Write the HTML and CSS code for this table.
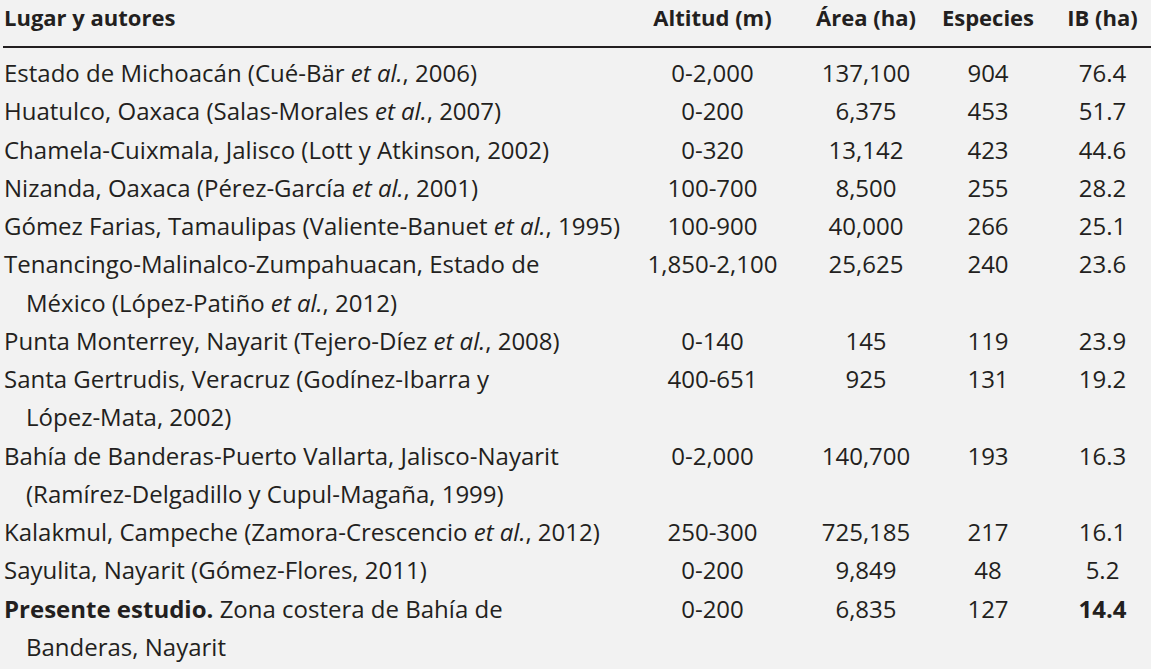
FILE: index.html
```html
<!DOCTYPE html>
<html lang="es">
<head>
<meta charset="utf-8">
<title>Tabla</title>
<link rel="stylesheet" href="styles.css">
</head>
<body>
<table class="tbl">
  <colgroup>
    <col class="c-place">
    <col class="c-alt">
    <col class="c-area">
    <col class="c-sp">
    <col class="c-ib">
  </colgroup>
  <thead>
    <tr>
      <th class="place">Lugar y autores</th>
      <th>Altitud (m)</th>
      <th>Área (ha)</th>
      <th>Especies</th>
      <th class="ib">IB (ha)</th>
    </tr>
  </thead>
  <tbody>
    <tr><td class="place">Estado de Michoacán (Cué-Bär <i>et al.</i>, 2006)</td><td>0-2,000</td><td>137,100</td><td>904</td><td class="ib">76.4</td></tr>
    <tr><td class="place">Huatulco, Oaxaca (Salas-Morales <i>et al.</i>, 2007)</td><td>0-200</td><td>6,375</td><td>453</td><td class="ib">51.7</td></tr>
    <tr><td class="place">Chamela-Cuixmala, Jalisco (Lott y Atkinson, 2002)</td><td>0-320</td><td>13,142</td><td>423</td><td class="ib">44.6</td></tr>
    <tr><td class="place">Nizanda, Oaxaca (Pérez-García <i>et al.</i>, 2001)</td><td>100-700</td><td>8,500</td><td>255</td><td class="ib">28.2</td></tr>
    <tr><td class="place">Gómez Farias, Tamaulipas (Valiente-Banuet <i>et al.</i>, 1995)</td><td>100-900</td><td>40,000</td><td>266</td><td class="ib">25.1</td></tr>
    <tr><td class="place">Tenancingo-Malinalco-Zumpahuacan, Estado de<br>México (López-Patiño <i>et al.</i>, 2012)</td><td>1,850-2,100</td><td>25,625</td><td>240</td><td class="ib">23.6</td></tr>
    <tr><td class="place">Punta Monterrey, Nayarit (Tejero-Díez <i>et al.</i>, 2008)</td><td>0-140</td><td>145</td><td>119</td><td class="ib">23.9</td></tr>
    <tr><td class="place">Santa Gertrudis, Veracruz (Godínez-Ibarra y<br>López-Mata, 2002)</td><td>400-651</td><td>925</td><td>131</td><td class="ib">19.2</td></tr>
    <tr><td class="place">Bahía de Banderas-Puerto Vallarta, Jalisco-Nayarit<br>(Ramírez-Delgadillo y Cupul-Magaña, 1999)</td><td>0-2,000</td><td>140,700</td><td>193</td><td class="ib">16.3</td></tr>
    <tr><td class="place">Kalakmul, Campeche (Zamora-Crescencio <i>et al.</i>, 2012)</td><td>250-300</td><td>725,185</td><td>217</td><td class="ib">16.1</td></tr>
    <tr><td class="place">Sayulita, Nayarit (Gómez-Flores, 2011)</td><td>0-200</td><td>9,849</td><td>48</td><td class="ib">5.2</td></tr>
    <tr><td class="place"><b>Presente estudio.</b> Zona costera de Bahía de<br>Banderas, Nayarit</td><td>0-200</td><td>6,835</td><td>127</td><td class="ib"><b>14.4</b></td></tr>
  </tbody>
</table>
</body>
</html>
```
FILE: styles.css
```css
html, body {
  margin: 0;
  padding: 0;
  background: #f2f2f2;
}
body {
  padding-left: 3px;
  font-family: "Open Sans", "Liberation Sans", sans-serif;
  color: #231f20;
  font-size: 24px;
}
.tbl {
  border-collapse: collapse;
  table-layout: fixed;
  width: 1148px;
}
.c-place { width: 622px; }
.c-alt { width: 175px; }
.c-area { width: 132px; }
.c-sp { width: 112px; }
.c-ib { width: 107px; }
.tbl th {
  font-size: 22px;
  font-weight: bold;
  line-height: 34px;
  padding: 0 0 12px 0;
  border-bottom: 2px solid #231f20;
  text-align: center;
  white-space: nowrap;
}
.tbl td {
  line-height: 38.27px;
  padding: 0;
  text-align: center;
  vertical-align: top;
  white-space: nowrap;
}
.tbl tbody tr:first-child td { padding-top: 6px; }
.tbl .place {
  text-align: left;
  padding-left: 23px;
  text-indent: -22px;
}
.tbl th.place { padding-left: 23px; }
.tbl .ib { padding-left: 10px; }
.tbl b { font-weight: bold; }
```
